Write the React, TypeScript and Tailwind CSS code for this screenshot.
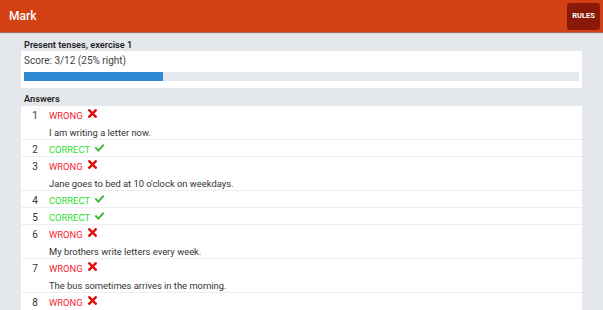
import React from "react";

const XIcon = () => (
  <svg width="9" height="9" viewBox="0 0 9 9" className="ml-[5px] mt-[3px] shrink-0">
    <path d="M1.3 1.3 L7.7 7.7 M7.7 1.3 L1.3 7.7" stroke="#e00d0d" strokeWidth="2.4" strokeLinecap="square" />
  </svg>
);

const CheckIcon = () => (
  <svg width="9" height="8" viewBox="0 0 9 8" className="ml-[5px] mt-[4px] shrink-0">
    <path d="M1 4.2 L3.4 6.6 L8 1.4" stroke="#3cb83c" strokeWidth="2" fill="none" strokeLinecap="square" />
  </svg>
);

type Row = { n: number; ok: boolean; s?: string };

const rows: Row[] = [
  { n: 1, ok: false, s: "I am writing a letter now." },
  { n: 2, ok: true },
  { n: 3, ok: false, s: "Jane goes to bed at 10 o'clock on weekdays." },
  { n: 4, ok: true },
  { n: 5, ok: true },
  { n: 6, ok: false, s: "My brothers write letters every week." },
  { n: 7, ok: false, s: "The bus sometimes arrives in the morning." },
  { n: 8, ok: false, s: "" },
];

export default function App() {
  return (
    <div
      className="w-[603px] h-[310px] overflow-hidden bg-[#e4e7eb] flex flex-col"
      style={{ fontFamily: "Roboto, 'Liberation Sans', sans-serif" }}
    >
      <div className="h-[32px] shrink-0 bg-[#d24014] flex items-center justify-between pl-[9px] pr-[3px] shadow-[0_1px_1px_rgba(120,30,10,0.6)] relative z-10">
        <span className="text-white text-[12px] font-medium leading-none">Mark</span>
        <div className="w-[33px] h-[27px] rounded-[3px] bg-[#8a1a08] flex items-center justify-center">
          <span className="text-white text-[7.5px] font-bold leading-none">RULES</span>
        </div>
      </div>
      <div className="px-[21px] pt-[7px] flex flex-col">
        <div className="h-[12px] leading-[12px] px-[3px] text-[9.2px] font-semibold text-[#1f1f1f]">
          Present tenses, exercise 1
        </div>
        <div className="bg-white px-[3px] pt-[4px] pb-[7px] flex flex-col">
          <div className="h-[12px] leading-[12px] text-[10px] text-[#444]">Score: 3/12 (25% right)</div>
          <div className="mt-[5px] h-[9px] bg-[#e5e8ec]">
            <div className="h-full w-[25%] bg-[#2f8ad6]" />
          </div>
        </div>
        <div className="mt-[5px] h-[12px] leading-[12px] px-[3px] text-[9.2px] font-semibold text-[#1f1f1f]">
          Answers
        </div>
        <div className="mt-[1px] flex flex-col">
          {rows.map((r) => (
            <div key={r.n} className="flex bg-white border-b border-[#eceef1] text-[9.4px]">
              <div className="w-[28px] shrink-0 text-center h-[16px] leading-[20px] text-[10px] text-[#333]">{r.n}</div>
              <div className="flex flex-col">
                <div className="flex items-start h-[16px]">
                  <span className={"leading-[20px] " + (r.ok ? "text-[#2ee02e]" : "text-[#f5222d]")}>
                    {r.ok ? "CORRECT" : "WRONG"}
                  </span>
                  {r.ok ? <CheckIcon /> : <XIcon />}
                </div>
                {r.s !== undefined && (
                  <div className="h-[17px] leading-[21px] text-[#333]">{r.s}</div>
                )}
              </div>
            </div>
          ))}
        </div>
      </div>
    </div>
  );
}
